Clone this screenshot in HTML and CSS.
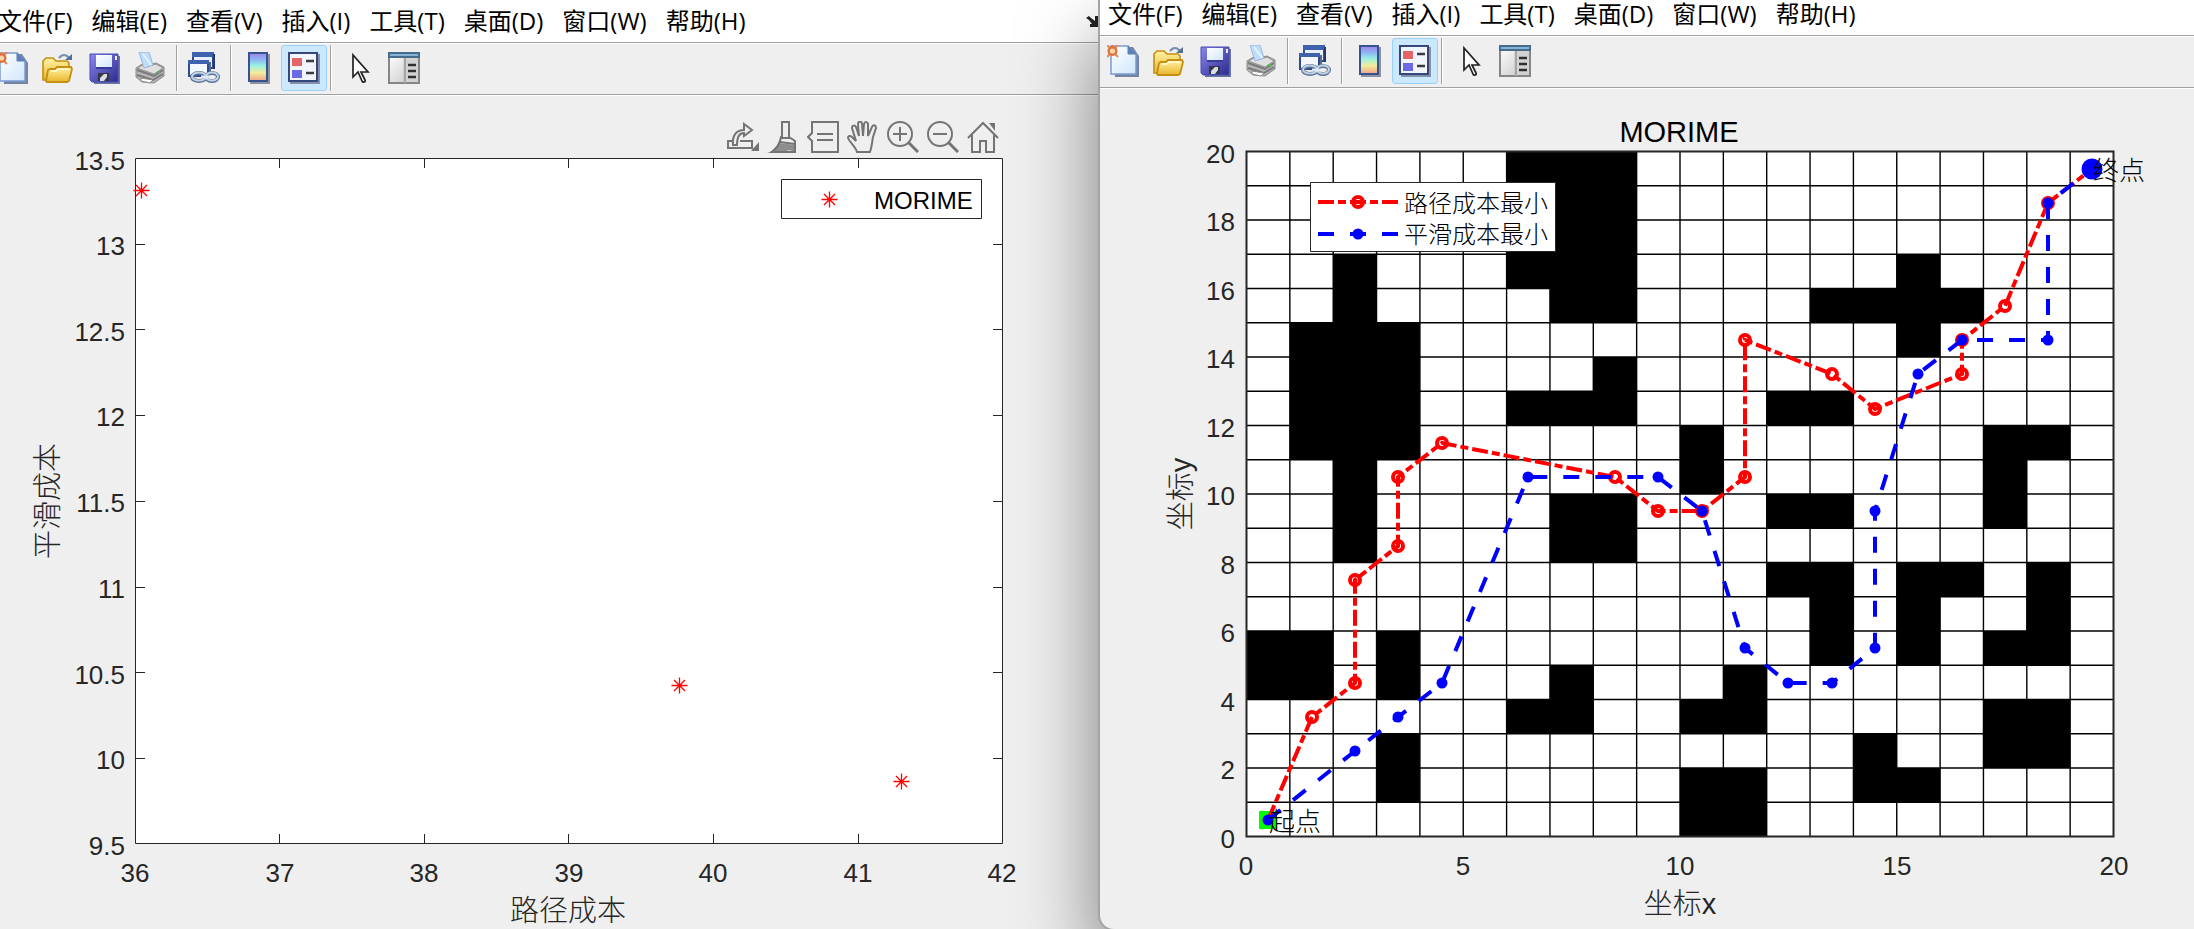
FILE: index.html
```html
<!DOCTYPE html>
<html lang="zh-CN">
<head>
<meta charset="utf-8">
<title>MORIME</title>
<link rel="stylesheet" href="styles.css">
</head>
<body>
<svg class="sprite" aria-hidden="true">
  <defs>
    <linearGradient id="g-page" x1="0" y1="0" x2="1" y2="1"><stop offset="0" stop-color="#fff"/><stop offset="1" stop-color="#cfe6fb"/></linearGradient>
    <linearGradient id="g-gold" x1="0" y1="0" x2="0" y2="1"><stop offset="0" stop-color="#fff3a6"/><stop offset="1" stop-color="#e9b52c"/></linearGradient>
    <linearGradient id="g-disk" x1="0" y1="0" x2="1" y2="1"><stop offset="0" stop-color="#8a86f0"/><stop offset="1" stop-color="#2c2a8c"/></linearGradient>
    <linearGradient id="g-rainbow" x1="0" y1="0" x2="0" y2="1"><stop offset="0" stop-color="#9d84ea"/><stop offset=".25" stop-color="#8fb8f2"/><stop offset=".45" stop-color="#9af0e4"/><stop offset=".7" stop-color="#f2ee9a"/><stop offset="1" stop-color="#f0a08e"/></linearGradient>
    <linearGradient id="g-grey" x1="0" y1="0" x2="1" y2="1"><stop offset="0" stop-color="#fff"/><stop offset="1" stop-color="#c4c4c4"/></linearGradient>
    <symbol id="i-new" viewBox="0 0 32 32">
      <path d="M6 2h20l6 9v21H8z" fill="#74849f"/>
      <path d="M4 1h17l8 8v20H4z" fill="url(#g-page)" stroke="#7c9ad6" stroke-width="1.5"/>
      <path d="M21 1v8h8z" fill="#5f7fb8" stroke="#5f7fb8"/>
      <path d="M0 0l3 3M11 0L8 3M0 12l3-3M11 12L8 9M5.500 0v2" stroke="#e8865a" stroke-width="2"/>
      <circle cx="5.500" cy="6" r="3.800" fill="#fbd9a8" stroke="#e2703c" stroke-width="2.400"/>
    </symbol>
    <symbol id="i-open" viewBox="0 0 32 32">
      <path d="M17 6c3-4 7-4 10 0" fill="none" stroke="#7791b0" stroke-width="2.200"/>
      <path d="M23 8h7V2z" fill="#566f92"/>
      <path d="M1 28V9l3-3h7l3 3h11l2 2v17z" fill="url(#g-gold)" stroke="#c58f12" stroke-width="1.600"/>
      <path d="M4 29l2-11 2-1h5l2-2h14l1 2-3 12-2 1H5z" fill="url(#g-gold)" stroke="#c58f12" stroke-width="1.800"/>
      <path d="M9 19h5l2-2h11" fill="none" stroke="#fffbd8" stroke-width="1.500"/>
    </symbol>
    <symbol id="i-save" viewBox="0 0 32 32">
      <path d="M4 4h28v28H6z" fill="#6a769c"/>
      <path d="M2 2h28v28H4l-2-2z" fill="url(#g-disk)" stroke="#4b4bb4"/>
      <path d="M8 3h16v13H8z" fill="url(#g-page)"/>
      <path d="M8 16h16" stroke="#3a3a98" stroke-width="2"/>
      <path d="M10 21h11v8H10z" fill="#34364a"/><path d="M12 26l4-4h3v3l-3 4h-4z" fill="#d8dce6"/>
      <path d="M27 4h2v4h-2z" fill="#eef"/>
    </symbol>
    <symbol id="i-print" viewBox="0 0 32 32">
      <path d="M2 16l8-5 3 2 9-2 8 4v9l-10 7-12-1-6-5z" fill="#b4b4b4" stroke="#8a8a8a"/>
      <path d="M3 16l8-4 2 3 9-3 7 4-9 6z" fill="#e0e0e0" stroke="#909090"/>
      <path d="M5 0h10l4 13-9 3z" fill="#bfdcfa" stroke="#98b8e6"/>
      <path d="M9 2l8 11" stroke="#e4f2ff" stroke-width="2"/>
      <path d="M3 18l17 6 9-6M3 23l16 5 10-6" fill="none" stroke="#7a7a7a" stroke-width="2"/>
      <path d="M7 26l12 2-3 3-9-2z" fill="#fff" stroke="#8a8a8a"/>
      <path d="M23 19h3v2h-3z" fill="#5fae58"/>
    </symbol>
    <symbol id="i-link" viewBox="0 0 32 32">
      <path d="M5 1h20v15H5z" fill="#e9effa" stroke="#2f4c8c" stroke-width="2"/><path d="M4 0h22v5H4z" fill="#3f62ae"/>
      <path d="M26 2v15" stroke="#223a70" stroke-width="2"/>
      <path d="M1 9h19v15H1z" fill="#f3f7ff" stroke="#2f4c8c" stroke-width="2"/><path d="M0 8h21v4H0z" fill="#3f62ae"/>
      <path d="M22 10v10" stroke="#5a6a8e" stroke-width="2"/>
      <ellipse cx="11" cy="25" rx="7" ry="4" fill="none" stroke="#5c7396" stroke-width="4"/>
      <ellipse cx="24" cy="25" rx="6" ry="4" fill="none" stroke="#5c7396" stroke-width="4"/>
      <ellipse cx="11" cy="24.500" rx="7" ry="4" fill="none" stroke="#c3d3e6" stroke-width="2"/>
      <ellipse cx="24" cy="24.500" rx="6" ry="4" fill="none" stroke="#c3d3e6" stroke-width="2"/>
      <path d="M13 25h9" stroke="#dde8f4" stroke-width="3"/>
    </symbol>
    <symbol id="i-colorbar" viewBox="0 0 32 32">
      <path d="M8 2h20v30H8z" fill="#8b93a3"/>
      <path d="M7 1h18v28H7z" fill="url(#g-rainbow)" stroke="#38528e" stroke-width="2"/>
    </symbol>
    <symbol id="i-legend" viewBox="0 0 32 32">
      <path d="M2 2h30v30H2z" fill="#8490aa"/>
      <path d="M1 1h28v28H1z" fill="#f2f5fe" stroke="#34487e" stroke-width="2"/>
      <path d="M4 6h10v8H4z" fill="#e56464"/><path d="M4 18h10v8H4z" fill="#6a6ae6"/>
      <path d="M18 9h8M18 21h8" stroke="#3c3c3c" stroke-width="2.400"/>
    </symbol>
    <symbol id="i-arrow" viewBox="0 0 32 32">
      <path d="M11 3v22l5-5 4 9c1 2 4 1 3-1l-4-8h7z" fill="#fff" stroke="#222" stroke-width="1.700"/>
    </symbol>
    <symbol id="i-panel" viewBox="0 0 32 32">
      <path d="M1 1h30v30H1z" fill="url(#g-grey)" stroke="#868686" stroke-width="2"/>
      <path d="M0 0h32v6H0z" fill="#466b8c"/><path d="M2 2h28v2H2z" fill="#86b4d2"/>
      <path d="M17 6v25" stroke="#a6a6a6" stroke-width="2.500"/>
      <path d="M18 6h12v24H18z" fill="#d2d2d2"/>
      <path d="M20 13h8M20 19h8M20 25h8" stroke="#303030" stroke-width="2.400"/>
    </symbol>
    <marker id="m-ring" markerUnits="userSpaceOnUse" markerWidth="20" markerHeight="20" refX="10" refY="10"><circle cx="10" cy="10" r="5" fill="none" stroke="#f00" stroke-width="4"/></marker>
    <marker id="m-dot" markerUnits="userSpaceOnUse" markerWidth="20" markerHeight="20" refX="10" refY="10"><circle cx="10" cy="10" r="5.500" fill="#00f"/></marker>
    <g id="star" stroke="#f00" stroke-width="1.300"><path d="M-8 0H8M0-8V8M-5.500-5.500l11 11M-5.500 5.500l11-11"/></g>
  </defs>
</svg>

<div class="desktop">
  <section class="window window-back" aria-label="Pareto">
    <nav class="menubar">
      <button>文件(F)</button><button>编辑(E)</button><button>查看(V)</button><button>插入(I)</button><button>工具(T)</button><button>桌面(D)</button><button>窗口(W)</button><button>帮助(H)</button>
      <button class="dock" aria-label="停靠"><svg viewBox="0 0 14 12"><path d="M0 3l3-2 2 2 4 3V1h3l1 11H4V9h2L3 5z" fill="#222"/></svg></button>
    </nav>
    <div class="toolbar">
      <button aria-label="新建"><svg><use href="#i-new"/></svg></button>
      <button aria-label="打开"><svg><use href="#i-open"/></svg></button>
      <button aria-label="保存"><svg><use href="#i-save"/></svg></button>
      <button aria-label="打印"><svg><use href="#i-print"/></svg></button>
      <span class="sep"></span>
      <button aria-label="链接绘图"><svg><use href="#i-link"/></svg></button>
      <span class="sep"></span>
      <button aria-label="颜色栏"><svg><use href="#i-colorbar"/></svg></button>
      <button class="active" aria-label="图例" aria-pressed="true"><svg><use href="#i-legend"/></svg></button>
      <span class="sep"></span>
      <button aria-label="编辑绘图"><svg><use href="#i-arrow"/></svg></button>
      <button aria-label="属性检查器"><svg><use href="#i-panel"/></svg></button>
    </div>
    <div class="axes-tools">
      <button aria-label="导出"><svg viewBox="0 0 32 32"><path d="M6 20H1v7h24v-7H13"/><path d="M6 24c-1-9 3-15 11-15V3l8 6-8 6v-3c-5 0-7 4-7 12z"/><path d="M32 21v9h-8z" class="solid"/></svg></button>
      <button aria-label="刷亮"><svg viewBox="0 0 32 32"><path d="M15 1h7v15l6 4v11H5c5-4 8-8 9-15h1z"/><path d="M14 17h9M13 21l15 2"/><path d="M0 32c6-2 9-6 12-10l16 2v8l-3-2c-3-2-7 1-9 2z" class="solid soft"/></svg></button>
      <button aria-label="数据提示"><svg viewBox="0 0 32 32"><path d="M5 1h26v30H5V20l-4-4 4-4z"/><path d="M10 13h16M10 19h16"/></svg></button>
      <button aria-label="平移"><svg viewBox="0 0 32 32"><path d="M10 31C9 26 3 22 1 17c0-2 2-3 4-1l4 4L5 7c0-3 3-3 4-1l3 9-1-12c0-3 4-3 4 0l1 12 1-12c1-3 4-2 4 0v12l4-9c1-3 4-2 4 1l-3 9c-1 5-1 9-3 15z"/></svg></button>
      <button aria-label="放大"><svg viewBox="0 0 32 32"><circle cx="13" cy="13" r="12"/><path d="M6 13h14M13 6v14"/><path d="M22 22l9 9" class="thick"/></svg></button>
      <button aria-label="缩小"><svg viewBox="0 0 32 32"><circle cx="13" cy="13" r="12"/><path d="M6 13h14"/><path d="M22 22l9 9" class="thick"/></svg></button>
      <button aria-label="还原视图"><svg viewBox="0 0 32 32"><path d="M1 17L16 2l15 15M5 14v17h8V20h6v11h8V14"/><path d="M22 2h6v8z" class="solid"/></svg></button>
    </div>
    <svg class="plot" viewBox="0 153 1100 776" role="img">
      <path d="M135.500 158.500H1002.500V843.500H135.500z" fill="#fff" stroke="#262626"/>
      <path class="tick" d="M279.500 843v-9M424.500 843v-9M568.500 843v-9M713.500 843v-9M858.500 843v-9M279.500 159v9M424.500 159v9M568.500 159v9M713.500 159v9M858.500 159v9M136 244.500h9M136 329.500h9M136 415.500h9M136 501.500h9M136 587.500h9M136 672.500h9M136 758.500h9M1002 244.500h-9M1002 329.500h-9M1002 415.500h-9M1002 501.500h-9M1002 587.500h-9M1002 672.500h-9M1002 758.500h-9"/>
      <g class="tick-label end">
        <text x="125" y="170">13.5</text><text x="125" y="255">13</text><text x="125" y="341">12.5</text><text x="125" y="426">12</text><text x="125" y="512">11.5</text><text x="125" y="598">11</text><text x="125" y="684">10.5</text><text x="125" y="769">10</text><text x="125" y="855">9.5</text>
      </g>
      <g class="tick-label mid">
        <text x="135" y="882">36</text><text x="280" y="882">37</text><text x="424" y="882">38</text><text x="569" y="882">39</text><text x="713" y="882">40</text><text x="858" y="882">41</text><text x="1002" y="882">42</text>
      </g>
      <text class="axis-label" x="568" y="921">路径成本</text>
      <text class="axis-label" transform="translate(58 501) rotate(-90)">平滑成本</text>
      <use href="#star" x="141.500" y="190.500"/><use href="#star" x="679.500" y="685.500"/><use href="#star" x="901.500" y="781.500"/>
      <path d="M781.500 179.500h200v39h-200z" fill="#fff" stroke="#262626"/>
      <use href="#star" x="829.500" y="199.500"/>
      <text class="legend-label" x="874" y="209">MORIME</text>
    </svg>
  </section>

  <section class="window window-front" aria-label="MORIME">
    <nav class="menubar">
      <button>文件(F)</button><button>编辑(E)</button><button>查看(V)</button><button>插入(I)</button><button>工具(T)</button><button>桌面(D)</button><button>窗口(W)</button><button>帮助(H)</button>
    </nav>
    <div class="toolbar">
      <button aria-label="新建"><svg><use href="#i-new"/></svg></button>
      <button aria-label="打开"><svg><use href="#i-open"/></svg></button>
      <button aria-label="保存"><svg><use href="#i-save"/></svg></button>
      <button aria-label="打印"><svg><use href="#i-print"/></svg></button>
      <span class="sep"></span>
      <button aria-label="链接绘图"><svg><use href="#i-link"/></svg></button>
      <span class="sep"></span>
      <button aria-label="颜色栏"><svg><use href="#i-colorbar"/></svg></button>
      <button class="active" aria-label="图例" aria-pressed="true"><svg><use href="#i-legend"/></svg></button>
      <span class="sep"></span>
      <button aria-label="编辑绘图"><svg><use href="#i-arrow"/></svg></button>
      <button aria-label="属性检查器"><svg><use href="#i-panel"/></svg></button>
    </div>
    <svg class="plot" viewBox="1100 89 1094 840" role="img">
      <text class="title" x="1679" y="142">MORIME</text>
      <g transform="matrix(43.350 0 0 -34.250 1246.500 836.500)">
        <path d="M0 0h20v20H0z" fill="#fff"/>
        <path d="M6 16h1v-1h2v5H6zM2 8h1v3h1v4H3v2H2v-2H1v-4h1zM6 12h3v2H8v-1H6zM13 15h2v-1h1v1h1v1h-1v1h-1v-1h-2zM12 12h2v1h-2zM10 10h1v2h-1zM7 8h2v2H7zM12 9h2v1h-2zM17 9h1v2h1v1h-2zM12 7h1V5h1v3h-2zM15 5h1v2h1v1h-2zM17 5h2v3h-1V6h-1zM0 4h2v2H0zM3 4h1v2H3zM3 1h1v2H3zM6 3h2v2H7V4H6zM10 3h2v2h-1V4h-1zM10 0h2v2h-2zM14 1h2v1h-1v1h-1zM17 2h2v2h-2z"/>
        <path class="grid" d="M0 1h20M0 2h20M0 3h20M0 4h20M0 5h20M0 6h20M0 7h20M0 8h20M0 9h20M0 10h20M0 11h20M0 12h20M0 13h20M0 14h20M0 15h20M0 16h20M0 17h20M0 18h20M0 19h20M1 0v20M2 0v20M3 0v20M4 0v20M5 0v20M6 0v20M7 0v20M8 0v20M9 0v20M10 0v20M11 0v20M12 0v20M13 0v20M14 0v20M15 0v20M16 0v20M17 0v20M18 0v20M19 0v20"/>
        <path class="frame" d="M0 0h20v20H0z"/>
      </g>
      <g class="tick-label end">
        <text x="1235" y="163">20</text><text x="1235" y="231">18</text><text x="1235" y="300">16</text><text x="1235" y="368">14</text><text x="1235" y="437">12</text><text x="1235" y="505">10</text><text x="1235" y="574">8</text><text x="1235" y="642">6</text><text x="1235" y="711">4</text><text x="1235" y="779">2</text><text x="1235" y="848">0</text>
      </g>
      <g class="tick-label mid">
        <text x="1246" y="875">0</text><text x="1463" y="875">5</text><text x="1680" y="875">10</text><text x="1897" y="875">15</text><text x="2114" y="875">20</text>
      </g>
      <text class="axis-label" x="1680" y="914">坐标x</text>
      <text class="axis-label" transform="translate(1191 494) rotate(-90)">坐标y</text>
      <path d="M1259 811h18v18h-18z" fill="#0f0"/>
      <polyline class="route red" points="1268,820 1312,717 1355,683 1355,580 1398,546 1398,477 1442,443 1615,477 1658,511 1702,511 1745,477 1745,340 1832,374 1875,409 1962,374 1962,340 2005,306 2048,203 2092,169"/>
      <polyline class="route blue" points="1268,820 1355,751 1398,717 1442,683 1528,477 1658,477 1702,511 1745,648 1788,683 1832,683 1875,648 1875,511 1918,374 1962,340 2048,340 2048,203 2092,169"/>
      <circle cx="1268" cy="820" r="5.500" fill="#00f"/>
      <circle cx="2092" cy="169" r="10.500" fill="#00f"/>
      <text class="point-label" x="1269" y="831">起点</text>
      <text class="point-label" x="2093" y="180">终点</text>
      <path d="M1310.500 182.500h245v69h-245z" fill="#fff" stroke="#262626"/>
      <polyline class="route red" points="1318,202 1358,202 1398,202"/>
      <polyline class="route blue" points="1318,234 1358,234 1398,234"/>
      <text class="legend-label" x="1404" y="212">路径成本最小</text>
      <text class="legend-label" x="1404" y="243">平滑成本最小</text>
    </svg>
  </section>
</div>
</body>
</html>
```
FILE: styles.css
```css
* { box-sizing: border-box; }

body {
  margin: 0;
  background: #efefef;
  font-family: "Open Sans", "Noto Sans CJK SC", sans-serif;
  overflow: hidden;
}

button {
  margin: 0;
  padding: 0;
  border: 0;
  background: none;
  color: inherit;
  font: inherit;
}

.sprite {
  position: absolute;
  width: 0;
  height: 0;
}

.desktop {
  display: grid;
  grid-template-columns: 1100fr 1094fr;
  min-height: 100vh;
}

.window {
  min-width: 0;
  background: #efefef;
}

.window-front {
  position: relative;
  border-bottom-left-radius: 14px;
  box-shadow: 0 0 0 2px #a4a4a4, 0 40px 80px rgba(0, 0, 0, .5);
}

.menubar {
  display: flex;
  height: 35px;
  padding-bottom: 7px;
  background: #fff;
  color: #000;
  font-size: 24px;
  line-height: 28px;
  white-space: nowrap;
}

.menubar button { padding: 0 11px 0 8px; }

.menubar .dock {
  display: flex;
  align-items: center;
  margin-left: auto;
  padding: 0;
}

.dock svg {
  width: 14px;
  height: 12px;
}

.toolbar {
  display: flex;
  align-items: center;
  height: 54px;
  padding-bottom: 2px;
  border-top: 1px solid #a0a0a0;
  border-bottom: 1px solid #fff;
  box-shadow: inset 0 1px #fff, inset 0 -1px #a0a0a0;
}

.toolbar button {
  flex: none;
  width: 46px;
  height: 46px;
  padding: 6px;
  border: 1px solid transparent;
  border-radius: 3px;
}

.toolbar .active {
  border-color: #99d1ff;
  background: #cce8ff;
}

.toolbar svg {
  display: block;
  width: 32px;
  height: 32px;
}

.sep {
  flex: none;
  width: 2px;
  height: 46px;
  margin: 0 3px;
  border-left: 1px solid #a0a0a0;
  border-right: 1px solid #fff;
}

/* The rear window runs off the left edge of the screen. */
.window-back .menubar {
  height: 42px;
  margin-left: -10px;
  padding: 7px 0;
}

.window-back .toolbar { margin-left: -11px; }

.axes-tools {
  display: flex;
  justify-content: flex-end;
  gap: 8px;
  padding: 25px 101px 0 0;
}

.axes-tools svg {
  display: block;
  width: 32px;
  height: 32px;
  fill: none;
  stroke: #747474;
  stroke-width: 2;
}

.axes-tools .thick { stroke-width: 3; }
.axes-tools .solid { fill: #747474; stroke: none; }
.axes-tools .soft { opacity: .8; }

.plot {
  display: block;
  width: 100%;
  height: auto;
  overflow: visible;
  font-family: "Liberation Sans", "Noto Sans CJK SC", sans-serif;
}

.tick { fill: none; stroke: #262626; }

.tick-label {
  fill: #262626;
  font-size: 26px;
}

.end { text-anchor: end; }
.mid { text-anchor: middle; }

.axis-label {
  fill: #262626;
  font-size: 29px;
  font-weight: 300;
  text-anchor: middle;
}

.title {
  font-size: 29px;
  text-anchor: middle;
}

.legend-label { font-size: 24px; font-weight: 300; }
.point-label { font-size: 26px; font-weight: 300; }

.grid,
.frame {
  fill: none;
  stroke: #000;
  stroke-width: 1.4;
  vector-effect: non-scaling-stroke;
}

.frame { stroke: #262626; stroke-width: 2; }

.route {
  fill: none;
  stroke-width: 4;
}

.red {
  stroke: #f00;
  stroke-dasharray: 16 4 8 4;
  marker-mid: url(#m-ring);
}

.blue {
  stroke: #00f;
  stroke-dasharray: 16 16;
  marker-mid: url(#m-dot);
}
```
